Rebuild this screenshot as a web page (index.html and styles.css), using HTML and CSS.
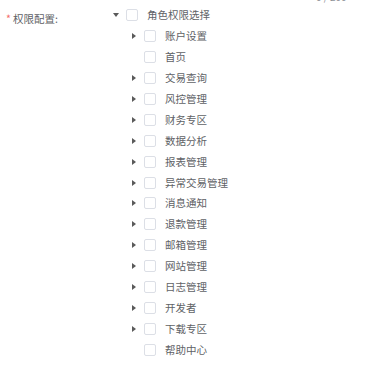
FILE: index.html
```html
<!DOCTYPE html>
<html lang="zh-CN">
<head>
  <meta charset="UTF-8" />
  <title>权限配置</title>
  <link rel="stylesheet" href="styles.css">
</head>
<body>
  <div class="counter">0 / 200</div>
  <div class="form-item">
    <label class="form-label"><span class="star">*</span>权限配置:</label>
    <div class="tree">
      <div class="node">
        <span class="caret down"></span>
        <span class="checkbox"></span>
        <span class="text">角色权限选择</span>
      </div>
      <div class="children">
        <div class="node"><span class="caret"></span><span class="checkbox"></span><span class="text">账户设置</span></div>
        <div class="node"><span class="caret leaf"></span><span class="checkbox"></span><span class="text">首页</span></div>
        <div class="node"><span class="caret"></span><span class="checkbox"></span><span class="text">交易查询</span></div>
        <div class="node"><span class="caret"></span><span class="checkbox"></span><span class="text">风控管理</span></div>
        <div class="node"><span class="caret"></span><span class="checkbox"></span><span class="text">财务专区</span></div>
        <div class="node"><span class="caret"></span><span class="checkbox"></span><span class="text">数据分析</span></div>
        <div class="node"><span class="caret"></span><span class="checkbox"></span><span class="text">报表管理</span></div>
        <div class="node"><span class="caret"></span><span class="checkbox"></span><span class="text">异常交易管理</span></div>
        <div class="node"><span class="caret"></span><span class="checkbox"></span><span class="text">消息通知</span></div>
        <div class="node"><span class="caret"></span><span class="checkbox"></span><span class="text">退款管理</span></div>
        <div class="node"><span class="caret"></span><span class="checkbox"></span><span class="text">邮箱管理</span></div>
        <div class="node"><span class="caret"></span><span class="checkbox"></span><span class="text">网站管理</span></div>
        <div class="node"><span class="caret"></span><span class="checkbox"></span><span class="text">日志管理</span></div>
        <div class="node"><span class="caret"></span><span class="checkbox"></span><span class="text">开发者</span></div>
        <div class="node"><span class="caret"></span><span class="checkbox"></span><span class="text">下载专区</span></div>
        <div class="node"><span class="caret leaf"></span><span class="checkbox"></span><span class="text">帮助中心</span></div>
      </div>
    </div>
  </div>
</body>
</html>
```

FILE: styles.css
```css
body {
  margin: 0;
  font-family: "Noto Sans CJK SC", "Noto Sans", sans-serif;
  font-size: 10.5px;
  color: #606266;
  background: #fff;
}

.counter {
  height: 0;
  padding-left: 316px;
  line-height: 0;
  font-size: 10px;
  color: #909399;
  transform: translateY(-3px);
}

.form-item {
  display: flex;
  padding-top: 5px;
}

.form-label {
  width: 110px;
  padding: 7px 0 0 6px;
  box-sizing: border-box;
  line-height: 14px;
  color: #606266;
}

.star {
  color: #f56c6c;
  margin-right: 2px;
}

.tree {
  flex: 1;
}

.node {
  display: flex;
  align-items: center;
  height: 20.9px;
  padding-left: 3px;
}

.children .node {
  padding-left: 21px;
}

.caret {
  width: 13px;
  height: 12px;
  position: relative;
  flex: none;
}

.caret::after {
  content: "";
  position: absolute;
  left: 1px;
  top: 3px;
  border-left: 4px solid #5a5a5a;
  border-top: 3px solid transparent;
  border-bottom: 3px solid transparent;
}

.caret.down::after {
  left: 0;
  top: 4px;
  border-top: 4px solid #5a5a5a;
  border-left: 3px solid transparent;
  border-right: 3px solid transparent;
  border-bottom: 0;
}

.caret.leaf::after {
  display: none;
}

.checkbox {
  width: 12px;
  height: 12px;
  border: 1px solid #dcdfe6;
  border-radius: 2px;
  box-sizing: border-box;
  background: #fff;
  flex: none;
  margin-right: 9px;
}

.text {
  line-height: 20px;
  white-space: nowrap;
}
```
